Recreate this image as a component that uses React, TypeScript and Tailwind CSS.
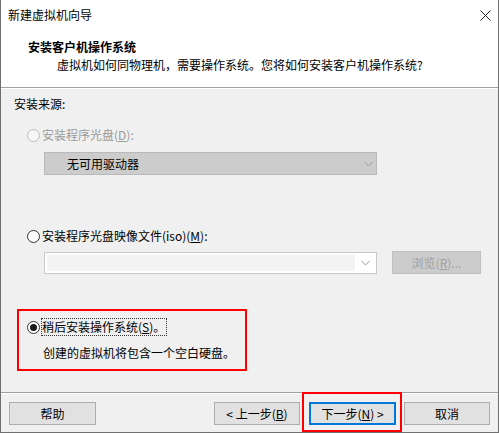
import React from "react";

const font = { fontFamily: '"Microsoft YaHei UI","Noto Sans CJK SC","Noto Sans",sans-serif' };

function Radio({ checked, disabled }: { checked?: boolean; disabled?: boolean }) {
  return (
    <span
      className={`flex h-[13px] w-[13px] shrink-0 items-center justify-center rounded-full border ${
        disabled ? "border-[#bcbcbc] bg-[#f7f7f7]" : "border-[#333333] bg-white"
      }`}
    >
      {checked && <span className="h-[7px] w-[7px] rounded-full bg-[#1a1a1a]" />}
    </span>
  );
}

function Chevron({ color }: { color: string }) {
  return (
    <svg width="9" height="6" viewBox="0 0 9 6">
      <path d="M0.5 1 L4.5 5 L8.5 1" fill="none" stroke={color} strokeWidth="1" />
    </svg>
  );
}

export default function App() {
  return (
    <div
      className="relative flex h-[433px] w-[499px] flex-col overflow-hidden border-x border-b border-[#6f6f6f] bg-[#f0f0f0] text-[12px] leading-[16px] text-black"
      style={font}
    >
      {/* title bar */}
      <div className="flex h-[30px] items-center justify-between bg-white pl-[7px] pr-[6px]">
        <span className="text-[12px]">新建虚拟机向导</span>
        <svg width="11" height="11" viewBox="0 0 11 11" className="mr-[1px]">
          <path d="M0.5 0.5 L10.5 10.5 M10.5 0.5 L0.5 10.5" stroke="#222" strokeWidth="1" />
        </svg>
      </div>
      {/* header */}
      <div className="flex h-[57px] flex-col bg-white">
        <div className="ml-[27px] mt-[9px] h-[16px] font-bold">安装客户机操作系统</div>
        <div className="ml-[56px] mt-[2px] h-[16px]">虚拟机如何同物理机，需要操作系统。您将如何安装客户机操作系统?</div>
      </div>
      <div className="h-px bg-[#a0a0a0]" />
      <div className="h-px bg-white" />

      {/* body */}
      <div className="flex flex-col">
        <div className="ml-[13px] mt-[7px] h-[16px]">安装来源:</div>

        <div className="ml-[26px] mt-[15px] flex h-[16px] items-center gap-[2px] text-[#9a9a9a]">
          <Radio disabled />
          <span>
            安装程序光盘(<span className="underline">D</span>):
          </span>
        </div>

        <div className="ml-[43px] mt-[9px] flex h-[23px] w-[333px] items-center border border-[#b9b9b9] bg-[#cccccc] pl-[22px] pr-[3px]">
          <span className="flex-1 text-black">无可用驱动器</span>
          <Chevron color="#9a9a9a" />
        </div>

        <div className="ml-[26px] mt-[53px] flex h-[16px] items-center gap-[2px]">
          <Radio />
          <span>
            安装程序光盘映像文件(iso)(<span className="underline">M</span>):
          </span>
        </div>

        <div className="mt-[7px] flex h-[23px] items-start">
          <div className="ml-[43px] mt-[1px] flex h-[22px] w-[333px] items-stretch border border-[#c9c9c9] bg-white p-[2px]">
            <div className="flex-1 bg-[#f3f3f3]" />
            <div className="flex w-[19px] items-center justify-center pl-[2px]">
              <Chevron color="#9a9a9a" />
            </div>
          </div>
          <div className="ml-[15px] flex h-[23px] w-[89px] items-center justify-center border border-[#bfbfbf] bg-[#cccccc] text-[#a0a0a0]">
            浏览(<span className="underline">R</span>)...
          </div>
        </div>

        <div className="ml-[16px] mt-[35px] flex h-[62px] w-[230px] flex-col border-2 border-[#ff0000] pl-[8px] pt-[8px]">
          <div className="flex h-[16px] items-center gap-[2px]">
            <Radio checked />
            <span className="outline-1 outline-dotted outline-[#333] outline-offset-0 pr-[1px]">
              稍后安装操作系统(<span className="underline">S</span>)。
            </span>
          </div>
          <div className="ml-[16px] mt-[10px] h-[16px]">创建的虚拟机将包含一个空白硬盘。</div>
        </div>
      </div>

      {/* footer */}
      <div className="mt-[21px] h-px bg-[#a0a0a0]" />
      <div className="h-px bg-white" />
      <div className="relative mt-[8px] flex h-[23px] items-center">
        <button className="ml-[8px] flex h-[23px] w-[87px] items-center justify-center border border-[#adadad] bg-[#e1e1e1]">
          帮助
        </button>
        <button className="ml-[118px] flex h-[23px] w-[86px] items-center justify-center border border-[#adadad] bg-[#e1e1e1]">
          &lt; 上一步(<span className="underline">B</span>)
        </button>
        <button className="ml-[9px] flex h-[23px] w-[87px] items-center justify-center border-2 border-[#0078d7] bg-[#e1e1e1]">
          下一步(<span className="underline">N</span>) &gt;
        </button>
        <button className="ml-[8px] flex h-[23px] w-[86px] items-center justify-center border border-[#adadad] bg-[#e1e1e1]">
          取消
        </button>
        <div className="pointer-events-none absolute left-[301px] top-[-10px] h-[40px] w-[100px] border-2 border-[#ff0000]" />
      </div>
    </div>
  );
}
